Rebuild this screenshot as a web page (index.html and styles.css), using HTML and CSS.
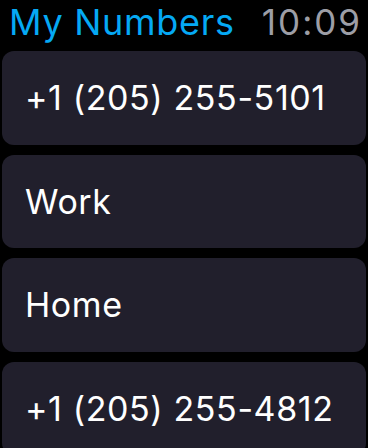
FILE: index.html
```html
<!DOCTYPE html>
<html>
<head>
<meta charset="utf-8">
<link rel="stylesheet" href="styles.css">
</head>
<body>
<div class="screen">
  <header class="bar">
    <span class="title">My Numbers</span>
    <span class="time">10:09</span>
  </header>
  <div class="list">
    <div class="card">+1 (205) 255-5101</div>
    <div class="card">Work</div>
    <div class="card">Home</div>
    <div class="card">+1 (205) 255-4812</div>
  </div>
</div>
</body>
</html>
```
FILE: styles.css
```css
html, body {
  margin: 0;
  padding: 0;
  background: #000;
}
.screen {
  width: 368px;
  height: 448px;
  overflow: hidden;
  background: #000;
  font-family: Inter, "Noto Sans", sans-serif;
}
.bar {
  display: flex;
  justify-content: space-between;
  align-items: baseline;
  height: 51px;
  padding: 0 6px 0 9px;
  box-sizing: border-box;
}
.title {
  color: #05a9f4;
  font-size: 36px;
  line-height: 44px;
  letter-spacing: 0.7px;
}
.time {
  color: #9d9ea6;
  font-size: 35px;
  line-height: 44px;
  letter-spacing: 2px;
}
.list {
  display: flex;
  flex-direction: column;
  gap: 10px;
  padding: 0 2px;
}
.card {
  flex: none;
  height: 93.5px;
  display: flex;
  align-items: center;
  padding-left: 23px;
  background: #211f2c;
  border-radius: 12px;
  color: #fff;
  font-size: 34px;
  letter-spacing: 0.6px;
}
```
